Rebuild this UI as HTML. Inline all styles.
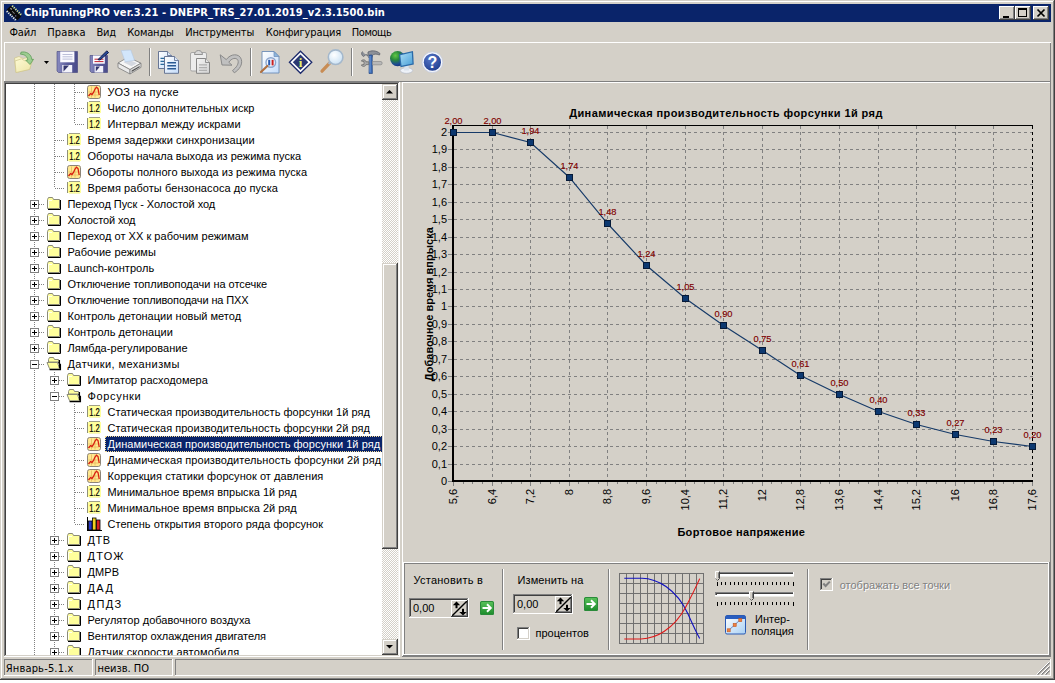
<!DOCTYPE html>
<html lang="ru"><head><meta charset="utf-8"><title>ChipTuningPRO</title><style>
html,body{margin:0;padding:0}
body{width:1055px;height:683px;overflow:hidden;background:#fff;position:relative;font-family:"Liberation Sans",sans-serif;font-size:11px;color:#000}
#win{position:absolute;left:0;top:0;width:1055px;height:680px;background:#d4d0c8;overflow:hidden}
.a{position:absolute}
.t{position:absolute;white-space:nowrap;line-height:16px}
.tah{font-family:"DejaVu Sans Condensed","Liberation Sans",sans-serif}
svg{position:absolute;overflow:visible}
</style></head><body><div id="win">
<div class="a" style="left:0px;top:0px;width:1055px;height:680px;background:#d4d0c8;"></div><div class="a" style="left:1px;top:1px;width:1053px;height:1px;background:#fff;"></div><div class="a" style="left:1px;top:1px;width:1px;height:678px;background:#fff;"></div><div class="a" style="left:0px;top:679px;width:1055px;height:1px;background:#404040;"></div><div class="a" style="left:1054px;top:0px;width:1px;height:680px;background:#404040;"></div><div class="a" style="left:1px;top:678px;width:1053px;height:1px;background:#808080;"></div><div class="a" style="left:1053px;top:1px;width:1px;height:678px;background:#808080;"></div>
<div class="a" style="left:4px;top:4px;width:1047px;height:18px;background:#0a246a;"></div><svg class="a" style="left:6px;top:5px" width="16" height="16" viewBox="0 0 16 16">
<g transform="rotate(45 8 8)">
<g fill="#e6f08c"><rect x="1.6" y="3.2" width="1.2" height="2.2"/><rect x="3.9" y="3.2" width="1.2" height="2.2"/><rect x="6.2" y="3.2" width="1.2" height="2.2"/><rect x="8.5" y="3.2" width="1.2" height="2.2"/><rect x="10.8" y="3.2" width="1.2" height="2.2"/><rect x="13.1" y="3.2" width="1.2" height="2.2"/></g>
<g fill="#ececdc"><rect x="1.6" y="10.6" width="1.2" height="2.2"/><rect x="3.9" y="10.6" width="1.2" height="2.2"/><rect x="6.2" y="10.6" width="1.2" height="2.2"/><rect x="8.5" y="10.6" width="1.2" height="2.2"/><rect x="10.8" y="10.6" width="1.2" height="2.2"/><rect x="13.1" y="10.6" width="1.2" height="2.2"/></g>
<rect x="0.4" y="5.2" width="15.2" height="5.6" fill="#0a0a0a"/>
<rect x="2" y="6.4" width="2" height="1.4" fill="#9a9a9a"/>
<rect x="5.4" y="7.6" width="3.4" height=".9" fill="#8a8a8a"/>
<rect x="10.6" y="8.2" width="1.3" height="1.3" fill="#6a6aa0"/>
</g></svg><div class="t" style="left:24px;top:5px;height:16px;line-height:16px;color:#fff;font-weight:bold;font-size:11px;letter-spacing:0.05px;font-family:'DejaVu Sans Condensed','Liberation Sans',sans-serif" id="ttl">ChipTuningPRO ver.3.21 - DNEPR_TRS_27.01.2019_v2.3.1500.bin</div><div class="a" style="left:999px;top:6px;width:16px;height:14px;background:#d4d0c8;"></div><div class="a" style="left:999px;top:6px;width:15px;height:1px;background:#fff;"></div><div class="a" style="left:999px;top:6px;width:1px;height:13px;background:#fff;"></div><div class="a" style="left:999px;top:19px;width:16px;height:1px;background:#404040;"></div><div class="a" style="left:1014px;top:6px;width:1px;height:14px;background:#404040;"></div><div class="a" style="left:1000px;top:18px;width:14px;height:1px;background:#808080;"></div><div class="a" style="left:1013px;top:7px;width:1px;height:12px;background:#808080;"></div><div class="a" style="left:1003px;top:16px;width:6px;height:2px;background:#000;"></div><div class="a" style="left:1015px;top:6px;width:16px;height:14px;background:#d4d0c8;"></div><div class="a" style="left:1015px;top:6px;width:15px;height:1px;background:#fff;"></div><div class="a" style="left:1015px;top:6px;width:1px;height:13px;background:#fff;"></div><div class="a" style="left:1015px;top:19px;width:16px;height:1px;background:#404040;"></div><div class="a" style="left:1030px;top:6px;width:1px;height:14px;background:#404040;"></div><div class="a" style="left:1016px;top:18px;width:14px;height:1px;background:#808080;"></div><div class="a" style="left:1029px;top:7px;width:1px;height:12px;background:#808080;"></div><div class="a" style="left:1018px;top:8px;width:9px;height:9px;background:#000;"></div><div class="a" style="left:1019px;top:10px;width:7px;height:6px;background:#d4d0c8;"></div><div class="a" style="left:1033px;top:6px;width:16px;height:14px;background:#d4d0c8;"></div><div class="a" style="left:1033px;top:6px;width:15px;height:1px;background:#fff;"></div><div class="a" style="left:1033px;top:6px;width:1px;height:13px;background:#fff;"></div><div class="a" style="left:1033px;top:19px;width:16px;height:1px;background:#404040;"></div><div class="a" style="left:1048px;top:6px;width:1px;height:14px;background:#404040;"></div><div class="a" style="left:1034px;top:18px;width:14px;height:1px;background:#808080;"></div><div class="a" style="left:1047px;top:7px;width:1px;height:12px;background:#808080;"></div><svg class="a" style="left:1033px;top:6px" width="16" height="14"><path d="M4.5 3.5 L11.5 10.5 M11.5 3.5 L4.5 10.5" stroke="#000" stroke-width="1.7" fill="none"/></svg>
<div class="t tah mi" style="left:9.5px;top:25px;height:16px;font-size:11px;letter-spacing:-0.2px">Файл</div><div class="t tah mi" style="left:47.3px;top:25px;height:16px;font-size:11px;letter-spacing:0.1px">Правка</div><div class="t tah mi" style="left:96.5px;top:25px;height:16px;font-size:11px;letter-spacing:-0.2px">Вид</div><div class="t tah mi" style="left:127.3px;top:25px;height:16px;font-size:11px;letter-spacing:-0.2px">Команды</div><div class="t tah mi" style="left:185.2px;top:25px;height:16px;font-size:11px;letter-spacing:-0.18px">Инструменты</div><div class="t tah mi" style="left:265.8px;top:25px;height:16px;font-size:11px;letter-spacing:-0.14px">Конфигурация</div><div class="t tah mi" style="left:351.8px;top:25px;height:16px;font-size:11px;letter-spacing:-0.45px">Помощь</div>
<div class="a" style="left:4px;top:42px;width:1047px;height:1px;background:#fff;"></div><div class="a" style="left:4px;top:42px;width:1px;height:39px;background:#fff;"></div><div class="a" style="left:4px;top:81px;width:1047px;height:1px;background:#808080;"></div><div class="a" style="left:1050px;top:43px;width:1px;height:39px;background:#808080;"></div><div class="a" style="left:149px;top:48px;width:1px;height:28px;background:#808080;"></div><div class="a" style="left:150px;top:48px;width:1px;height:28px;background:#fff;"></div><div class="a" style="left:250px;top:48px;width:1px;height:28px;background:#808080;"></div><div class="a" style="left:251px;top:48px;width:1px;height:28px;background:#fff;"></div><div class="a" style="left:351px;top:48px;width:1px;height:28px;background:#808080;"></div><div class="a" style="left:352px;top:48px;width:1px;height:28px;background:#fff;"></div><svg style="left:44px;top:61px" width="6" height="4"><path d="M0 0H5L2.5 3Z" fill="#000"/></svg><svg width="0" height="0" style="left:0;top:0"><defs>
<linearGradient id="gfl" x1="0" y1="0" x2="1" y2="0"><stop offset="0" stop-color="#8a8cc0"/><stop offset=".5" stop-color="#5a5c9c"/><stop offset="1" stop-color="#4a4c8a"/></linearGradient>
<linearGradient id="gfol" x1="0" y1="0" x2="1" y2="1"><stop offset="0" stop-color="#fdfad4"/><stop offset="1" stop-color="#ece4a4"/></linearGradient>
<linearGradient id="gsh" x1="0" y1="0" x2="1" y2="1"><stop offset="0" stop-color="#30306a"/><stop offset="1" stop-color="#f4f4ff"/></linearGradient>
<linearGradient id="gpg" x1="0" y1="0" x2="1" y2="1"><stop offset="0" stop-color="#ffffff"/><stop offset="1" stop-color="#c4dcfa"/></linearGradient>
<linearGradient id="gpgg" x1="0" y1="0" x2="1" y2="1"><stop offset="0" stop-color="#f4f4f4"/><stop offset="1" stop-color="#d2d2d2"/></linearGradient>
<radialGradient id="ghelp" cx=".4" cy=".3" r=".8"><stop offset="0" stop-color="#5878c8"/><stop offset="1" stop-color="#1c3a8c"/></radialGradient>
<radialGradient id="glens" cx=".4" cy=".35" r=".7"><stop offset="0" stop-color="#ffffff"/><stop offset="1" stop-color="#c8e0f4"/></radialGradient>
<radialGradient id="gglobe" cx=".35" cy=".3" r=".8"><stop offset="0" stop-color="#62c846"/><stop offset=".38" stop-color="#2a8a3a"/><stop offset=".72" stop-color="#1c4a94"/><stop offset="1" stop-color="#142a70"/></radialGradient>
<linearGradient id="gmon" x1="0" y1="0" x2="1" y2="1"><stop offset="0" stop-color="#a8dcf4"/><stop offset="1" stop-color="#4aa0d8"/></linearGradient>
<linearGradient id="ggrn" x1="0" y1="0" x2="0" y2="1"><stop offset="0" stop-color="#5cc45c"/><stop offset="1" stop-color="#1a8a2a"/></linearGradient>
<linearGradient id="gint" x1="0" y1="0" x2="1" y2="1"><stop offset="0" stop-color="#ffffff"/><stop offset="1" stop-color="#a8d0f4"/></linearGradient>
</defs></svg><svg style="left:12px;top:50px" width="24" height="24" viewBox="0 0 24 24">
<path d="M2.5 8 L7 6.5 L11 8.5 L16 7.5 L19.5 9 L18 19 L4 22.5 Z" fill="#f8f4c8" stroke="#cfc694" stroke-width=".8"/>
<path d="M3 11 L9.5 8.8 L13 11 L21 9.2 L17.5 19.5 L4 22.5 Z" fill="url(#gfol)" stroke="#cfc48c" stroke-width=".7"/>
<path d="M9 2.2 C14 1 19.5 4 19.8 9.5 L21.5 9.3 L18 14.5 L13.8 10.3 L15.8 10 C15.5 6.5 12.5 4.2 8.5 4.2 Z" fill="#9ccc90" stroke="#5c9c58" stroke-width=".8"/>
</svg><svg style="left:55px;top:50px" width="24" height="24" viewBox="0 0 24 24">
<path d="M2 1.5 H22.5 V22.5 H3.5 L2 21 Z" fill="url(#gfl)" stroke="#40427a" stroke-width=".6"/>
<rect x="5.2" y="1.5" width="14.2" height="10.8" fill="#fafaff"/>
<path d="M7.5 4.5H17.5M7.5 6.8H17.5M7.5 9.1H17.5" stroke="#b4b8d4" stroke-width=".9"/>
<rect x="7.2" y="15" width="10" height="7.5" fill="#f2f2fa"/>
<path d="M8.5 15.6 H14 L8.5 21.5Z" fill="#34366e"/>
</svg><svg style="left:87px;top:50px" width="24" height="24" viewBox="0 0 24 24">
<path d="M3 5.5 H20.5 V22.5 H4.5 L3 21 Z" fill="url(#gfl)" stroke="#40427a" stroke-width=".6"/>
<rect x="6" y="5.5" width="11.8" height="8.2" fill="#fafaff"/>
<path d="M7.5 9.2H16.5" stroke="#c02030" stroke-width="1"/><path d="M7.5 11.6H16.5" stroke="#c02030" stroke-width="1"/>
<rect x="7.6" y="16" width="8.6" height="6.5" fill="#f2f2fa"/>
<path d="M8.8 16.6 H13 L8.8 21.5Z" fill="#34366e"/>
<path d="M19.8 0.8 L21.6 2.6 L13 10 L11 9.6 Z" fill="#2a4a9a" stroke="#14204a" stroke-width="1"/>
</svg><svg style="left:117px;top:49px" width="25" height="26" viewBox="0 0 25 26">
<path d="M1 14 L11 8.2 L24 14.2 L13 20.6 Z" fill="#f6f6f6" stroke="#7c7c7c" stroke-width=".8"/>
<path d="M1 14 L13 20.6 L13 25 L1 18.6 Z" fill="#e9e9e9" stroke="#7c7c7c" stroke-width=".8"/>
<path d="M13 20.6 L24 14.2 L24 18.4 L13 25 Z" fill="#dcdcdc" stroke="#7c7c7c" stroke-width=".8"/>
<path d="M6.5 13.2 L11.5 10.4 L20 14.2 L14.5 17.2 Z" fill="#d4d8e0"/>
<path d="M4.2 1.6 L13.8 1 L17.5 11.2 L8.2 12.8 Z" fill="#d2e6fb" stroke="#b4c8e0" stroke-width=".6"/>
<path d="M14.6 21.6 L22.6 16.9 L22.6 18.2 L14.6 23 Z" fill="#505050"/>
</svg><svg style="left:156px;top:50px" width="24" height="24" viewBox="0 0 24 24">
<path d="M2.5 1.5 H11.5 L15.5 5.5 V18.5 H2.5Z" fill="url(#gpg)" stroke="#5a6a8c" stroke-width=".9"/>
<path d="M11.5 1.5V5.5H15.5" fill="#dce8f8" stroke="#5a6a8c" stroke-width=".8"/>
<path d="M4.5 8.3H9M4.5 11.3H9M4.5 14.3H9" stroke="#2a6a9c" stroke-width="1.3"/>
<path d="M8.5 6.5 H18.5 L22.5 10.5 V23.3 H8.5Z" fill="url(#gpg)" stroke="#5a6a8c" stroke-width=".9"/>
<path d="M18.5 6.5V10.5H22.5" fill="#dce8f8" stroke="#5a6a8c" stroke-width=".8"/>
<path d="M11.3 12.8H20M11.3 15.8H20M11.3 18.8H20" stroke="#2a5a94" stroke-width="1.4"/>
</svg><svg style="left:188px;top:49px" width="24" height="25" viewBox="0 0 24 25">
<rect x="2.5" y="3.5" width="16" height="18.5" rx="1.5" fill="#ececec" stroke="#a0a0a0" stroke-width=".9"/>
<path d="M6.5 5.5 C6.5 3.5 8 1.5 10.5 1.5 C13 1.5 14.5 3.5 14.5 5.5 Z" fill="#d8d8d8" stroke="#8a8a8a" stroke-width=".9"/>
<path d="M8.5 9.5 H17.5 L21.5 13.5 V24.3 H8.5Z" fill="url(#gpgg)" stroke="#7c7c7c" stroke-width=".9"/>
<path d="M17.5 9.5V13.5H21.5" fill="#e4e4e4" stroke="#7c7c7c" stroke-width=".8"/>
<path d="M11 15.8H19M11 18.6H19M11 21.4H19" stroke="#b0b0b0" stroke-width="1.2"/>
</svg><svg style="left:219px;top:50px" width="24" height="24" viewBox="0 0 24 24">
<path d="M1.2 4.8 L3 15 L13 15.2 L9.8 12.3 C12.5 8 17.5 7 19 10.5 C20 13.5 17.5 17.5 13.5 20.5 L15.3 22.8 C20.5 19.5 23.8 14.5 22.3 9.3 C20.3 3 11.5 3.5 7.3 9.6 Z" fill="#c0c0c0" stroke="#8a8a8a" stroke-width="1"/>
</svg><svg style="left:258px;top:50px" width="24" height="24" viewBox="0 0 24 24">
<path d="M4 1.5 H16 L21 6.5 V23 H4Z" fill="url(#gpg)" stroke="#6c8cb8" stroke-width=".9"/>
<path d="M16 1.5V6.5H21Z" fill="#8cb4dc" stroke="#6c8cb8" stroke-width=".7"/>
<circle cx="12.8" cy="12.5" r="4.8" fill="#f0f6ff" stroke="#8aa4cc" stroke-width="1.4"/>
<rect x="10.2" y="9.8" width="2" height="5.6" fill="#2a5ab0"/>
<rect x="13.6" y="9.8" width="2" height="5.6" fill="#c82020"/>
<path d="M9.3 16 L3 22" stroke="#b07040" stroke-width="2.2" stroke-linecap="round"/>
</svg><svg style="left:288px;top:50px" width="25" height="25" viewBox="0 0 25 25">
<path d="M12.5 1.2 L23.8 12.3 L12.5 23.3 L1.4 12.3Z" fill="#fff" stroke="#1c2a6c" stroke-width="1.3"/>
<path d="M12.5 4.6 L20.3 12.3 L12.5 19.9 L4.8 12.3Z" fill="#2a3874"/>
<text x="12.5" y="17" font-family="Liberation Serif,serif" font-weight="bold" font-size="13" fill="#e6f06c" text-anchor="middle">i</text>
</svg><svg style="left:319px;top:48px" width="27" height="27" viewBox="0 0 27 27">
<path d="M10.8 14.8 L3 23.2" stroke="#c88c54" stroke-width="3.2" stroke-linecap="round"/>
<path d="M11.8 13.6 L9.6 16" stroke="#a8b8c8" stroke-width="2.4"/>
<circle cx="16.6" cy="9.2" r="7.3" fill="url(#glens)" stroke="#a4b8cc" stroke-width="1.6"/>
</svg><svg style="left:359px;top:49px" width="25" height="26" viewBox="0 0 25 26">
<path d="M3.5 2.5 C2 4 2.5 6.5 4.5 7.5 L7 5.5 L9 6.5 L9 3 C12 1.5 17 1 21 4.5 L20.5 6 C17 4.5 14.5 5 13.5 6.5 L13 8.5 L9.5 8.5" fill="#8c9098" stroke="#5c6068" stroke-width=".8"/>
<path d="M10.3 6 H13.2 L13.4 24.5 H10 Z" fill="#3a6ab4" stroke="#2a4a84" stroke-width=".7"/>
<path d="M11 7 V23.5" stroke="#7aa4e0" stroke-width=".9"/>
<path d="M13.5 12.5 H22 C23.5 12.5 23.5 15.8 22 15.8 H13.5Z" fill="#b8b8b8" stroke="#8a8a8a" stroke-width=".7"/>
<path d="M9.8 12.8 H7 C6.5 10.5 3.5 10.2 2.2 12 L5 12.6 V15.4 L2.2 16 C3.5 18 6.5 17.8 7 15.6 H9.8Z" fill="#a8a8a8" stroke="#6c6c6c" stroke-width=".8"/>
</svg><svg style="left:389px;top:49px" width="26" height="26" viewBox="0 0 26 26">
<circle cx="8.6" cy="9.6" r="7.6" fill="url(#gglobe)"/>
<ellipse cx="17.5" cy="21.5" rx="6.2" ry="2.8" fill="#eef2f8" stroke="#b4bcc8" stroke-width=".7"/>
<path d="M15.5 16 H19.5 L20 21.5 H15Z" fill="#dce4ee"/>
<path d="M10 5.2 L24 2 L24.8 15.5 L11.5 18.2 Z" fill="#2a6aa8"/>
<path d="M11.3 6.3 L22.8 3.6 L23.5 14.5 L12.5 16.8 Z" fill="url(#gmon)"/>
</svg><svg style="left:420px;top:50px" width="25" height="25" viewBox="0 0 25 25">
<circle cx="12.4" cy="12.2" r="10.4" fill="#f4f6fc" stroke="#c4cce0" stroke-width=".8"/>
<circle cx="12.4" cy="12.2" r="8.6" fill="url(#ghelp)"/>
<text x="12.5" y="18" font-family="Liberation Sans,sans-serif" font-weight="bold" font-size="16" fill="#fff" text-anchor="middle">?</text>
</svg>
<div class="a" id="tree" style="left:4px;top:82px;width:396px;height:575px;background:#fff;overflow:hidden"><div class="a" style="left:30px;top:2px;width:1px;height:572px;background:repeating-linear-gradient(to bottom,#808080 0 1px,transparent 1px 2px)"></div><div class="a" style="left:50px;top:2px;width:1px;height:104px;background:repeating-linear-gradient(to bottom,#808080 0 1px,transparent 1px 2px)"></div><div class="a" style="left:70px;top:2px;width:1px;height:40px;background:repeating-linear-gradient(to bottom,#808080 0 1px,transparent 1px 2px)"></div><div class="a" style="left:50px;top:290px;width:1px;height:284px;background:repeating-linear-gradient(to bottom,#808080 0 1px,transparent 1px 2px)"></div><div class="a" style="left:70px;top:322px;width:1px;height:120px;background:repeating-linear-gradient(to bottom,#808080 0 1px,transparent 1px 2px)"></div><div class="a" style="left:71px;top:10px;width:10px;height:1px;background:repeating-linear-gradient(to right,#808080 0 1px,transparent 1px 2px)"></div><svg style="left:82px;top:2px" width="16" height="16" viewBox="0 0 16 16"><rect x="1.5" y="1.5" width="13" height="13" rx="2.2" fill="#ffe890" stroke="#8c8478" stroke-width="1"/><path d="M2.5 8H13.5M2.5 11H13.5M5.5 2.5V13.5M9 2.5V13.5" stroke="#e8b860" stroke-width=".8"/><path d="M2.5 12 L4.5 9.5 L6 10.5 L7.5 8.5 L9 5 L10.5 3.2 L12 4.5 L13.2 11" fill="none" stroke="#d82010" stroke-width="1.3"/></svg><div class="t tr" style="left:103.5px;top:2px;letter-spacing:0.273px">УОЗ на пуске</div><div class="a" style="left:71px;top:26px;width:10px;height:1px;background:repeating-linear-gradient(to right,#808080 0 1px,transparent 1px 2px)"></div><svg style="left:82px;top:18px" width="16" height="16" viewBox="0 0 16 16"><rect x="2" y="2" width="13" height="11" fill="#ffff9c"/><rect x="1" y="2" width="1" height="11" fill="#909078"/><rect x="3" y="1" width="11" height="1" fill="#a0a088"/><rect x="3" y="13" width="11" height="1" fill="#f6f6c0"/><text x="3.2" y="11.8" font-family="Liberation Sans,sans-serif" font-size="11.6" fill="#000" stroke="#000" stroke-width=".22" textLength="10.6" lengthAdjust="spacingAndGlyphs">1.2</text></svg><div class="t tr" style="left:103.5px;top:18px;letter-spacing:0.054px">Число дополнительных искр</div><div class="a" style="left:71px;top:42px;width:10px;height:1px;background:repeating-linear-gradient(to right,#808080 0 1px,transparent 1px 2px)"></div><svg style="left:82px;top:34px" width="16" height="16" viewBox="0 0 16 16"><rect x="2" y="2" width="13" height="11" fill="#ffff9c"/><rect x="1" y="2" width="1" height="11" fill="#909078"/><rect x="3" y="1" width="11" height="1" fill="#a0a088"/><rect x="3" y="13" width="11" height="1" fill="#f6f6c0"/><text x="3.2" y="11.8" font-family="Liberation Sans,sans-serif" font-size="11.6" fill="#000" stroke="#000" stroke-width=".22" textLength="10.6" lengthAdjust="spacingAndGlyphs">1.2</text></svg><div class="t tr" style="left:103.5px;top:34px;letter-spacing:0.114px">Интервал между искрами</div><div class="a" style="left:51px;top:58px;width:10px;height:1px;background:repeating-linear-gradient(to right,#808080 0 1px,transparent 1px 2px)"></div><svg style="left:62px;top:50px" width="16" height="16" viewBox="0 0 16 16"><rect x="2" y="2" width="13" height="11" fill="#ffff9c"/><rect x="1" y="2" width="1" height="11" fill="#909078"/><rect x="3" y="1" width="11" height="1" fill="#a0a088"/><rect x="3" y="13" width="11" height="1" fill="#f6f6c0"/><text x="3.2" y="11.8" font-family="Liberation Sans,sans-serif" font-size="11.6" fill="#000" stroke="#000" stroke-width=".22" textLength="10.6" lengthAdjust="spacingAndGlyphs">1.2</text></svg><div class="t tr" style="left:83.5px;top:50px;letter-spacing:0.085px">Время задержки синхронизации</div><div class="a" style="left:51px;top:74px;width:10px;height:1px;background:repeating-linear-gradient(to right,#808080 0 1px,transparent 1px 2px)"></div><svg style="left:62px;top:66px" width="16" height="16" viewBox="0 0 16 16"><rect x="2" y="2" width="13" height="11" fill="#ffff9c"/><rect x="1" y="2" width="1" height="11" fill="#909078"/><rect x="3" y="1" width="11" height="1" fill="#a0a088"/><rect x="3" y="13" width="11" height="1" fill="#f6f6c0"/><text x="3.2" y="11.8" font-family="Liberation Sans,sans-serif" font-size="11.6" fill="#000" stroke="#000" stroke-width=".22" textLength="10.6" lengthAdjust="spacingAndGlyphs">1.2</text></svg><div class="t tr" style="left:83.5px;top:66px;letter-spacing:0.000px">Обороты начала выхода из режима пуска</div><div class="a" style="left:51px;top:90px;width:10px;height:1px;background:repeating-linear-gradient(to right,#808080 0 1px,transparent 1px 2px)"></div><svg style="left:62px;top:82px" width="16" height="16" viewBox="0 0 16 16"><rect x="1.5" y="1.5" width="13" height="13" rx="2.2" fill="#ffe890" stroke="#8c8478" stroke-width="1"/><path d="M2.5 8H13.5M2.5 11H13.5M5.5 2.5V13.5M9 2.5V13.5" stroke="#e8b860" stroke-width=".8"/><path d="M2.5 12 L4.5 9.5 L6 10.5 L7.5 8.5 L9 5 L10.5 3.2 L12 4.5 L13.2 11" fill="none" stroke="#d82010" stroke-width="1.3"/></svg><div class="t tr" style="left:83.5px;top:82px;letter-spacing:0.054px">Обороты полного выхода из режима пуска</div><div class="a" style="left:51px;top:106px;width:10px;height:1px;background:repeating-linear-gradient(to right,#808080 0 1px,transparent 1px 2px)"></div><svg style="left:62px;top:98px" width="16" height="16" viewBox="0 0 16 16"><rect x="2" y="2" width="13" height="11" fill="#ffff9c"/><rect x="1" y="2" width="1" height="11" fill="#909078"/><rect x="3" y="1" width="11" height="1" fill="#a0a088"/><rect x="3" y="13" width="11" height="1" fill="#f6f6c0"/><text x="3.2" y="11.8" font-family="Liberation Sans,sans-serif" font-size="11.6" fill="#000" stroke="#000" stroke-width=".22" textLength="10.6" lengthAdjust="spacingAndGlyphs">1.2</text></svg><div class="t tr" style="left:83.5px;top:98px;letter-spacing:0.069px">Время работы бензонасоса до пуска</div><div class="a" style="left:35px;top:122px;width:6px;height:1px;background:repeating-linear-gradient(to right,#808080 0 1px,transparent 1px 2px)"></div><div class="a" style="left:26px;top:118px;width:7px;height:7px;border:1px solid #808080;background:#fff"></div><div class="a" style="left:28px;top:122px;width:5px;height:1px;background:#000;"></div><div class="a" style="left:30px;top:120px;width:1px;height:5px;background:#000;"></div><svg style="left:42px;top:114px" width="16" height="16" viewBox="0 0 16 16"><path d="M1.5 3.5 L2.5 1.5 H6.5 L7.5 3.5 H13.5 V12.5 H1.5Z" fill="#ffff9c" stroke="#8c8c78" stroke-width="1"/><path d="M14.5 4 V13.5 H2" fill="none" stroke="#000" stroke-width="1"/><path d="M2.5 4.5V11.5M2.5 4.5H6" stroke="#fffff0" stroke-width="1" fill="none"/></svg><div class="t tr" style="left:63.5px;top:114px;letter-spacing:-0.058px">Переход Пуск - Холостой ход</div><div class="a" style="left:35px;top:138px;width:6px;height:1px;background:repeating-linear-gradient(to right,#808080 0 1px,transparent 1px 2px)"></div><div class="a" style="left:26px;top:134px;width:7px;height:7px;border:1px solid #808080;background:#fff"></div><div class="a" style="left:28px;top:138px;width:5px;height:1px;background:#000;"></div><div class="a" style="left:30px;top:136px;width:1px;height:5px;background:#000;"></div><svg style="left:42px;top:130px" width="16" height="16" viewBox="0 0 16 16"><path d="M1.5 3.5 L2.5 1.5 H6.5 L7.5 3.5 H13.5 V12.5 H1.5Z" fill="#ffff9c" stroke="#8c8c78" stroke-width="1"/><path d="M14.5 4 V13.5 H2" fill="none" stroke="#000" stroke-width="1"/><path d="M2.5 4.5V11.5M2.5 4.5H6" stroke="#fffff0" stroke-width="1" fill="none"/></svg><div class="t tr" style="left:63.5px;top:130px;letter-spacing:-0.118px">Холостой ход</div><div class="a" style="left:35px;top:154px;width:6px;height:1px;background:repeating-linear-gradient(to right,#808080 0 1px,transparent 1px 2px)"></div><div class="a" style="left:26px;top:150px;width:7px;height:7px;border:1px solid #808080;background:#fff"></div><div class="a" style="left:28px;top:154px;width:5px;height:1px;background:#000;"></div><div class="a" style="left:30px;top:152px;width:1px;height:5px;background:#000;"></div><svg style="left:42px;top:146px" width="16" height="16" viewBox="0 0 16 16"><path d="M1.5 3.5 L2.5 1.5 H6.5 L7.5 3.5 H13.5 V12.5 H1.5Z" fill="#ffff9c" stroke="#8c8c78" stroke-width="1"/><path d="M14.5 4 V13.5 H2" fill="none" stroke="#000" stroke-width="1"/><path d="M2.5 4.5V11.5M2.5 4.5H6" stroke="#fffff0" stroke-width="1" fill="none"/></svg><div class="t tr" style="left:63.5px;top:146px;letter-spacing:0.033px">Переход от ХХ к рабочим режимам</div><div class="a" style="left:35px;top:170px;width:6px;height:1px;background:repeating-linear-gradient(to right,#808080 0 1px,transparent 1px 2px)"></div><div class="a" style="left:26px;top:166px;width:7px;height:7px;border:1px solid #808080;background:#fff"></div><div class="a" style="left:28px;top:170px;width:5px;height:1px;background:#000;"></div><div class="a" style="left:30px;top:168px;width:1px;height:5px;background:#000;"></div><svg style="left:42px;top:162px" width="16" height="16" viewBox="0 0 16 16"><path d="M1.5 3.5 L2.5 1.5 H6.5 L7.5 3.5 H13.5 V12.5 H1.5Z" fill="#ffff9c" stroke="#8c8c78" stroke-width="1"/><path d="M14.5 4 V13.5 H2" fill="none" stroke="#000" stroke-width="1"/><path d="M2.5 4.5V11.5M2.5 4.5H6" stroke="#fffff0" stroke-width="1" fill="none"/></svg><div class="t tr" style="left:63.5px;top:162px;letter-spacing:0.077px">Рабочие режимы</div><div class="a" style="left:35px;top:186px;width:6px;height:1px;background:repeating-linear-gradient(to right,#808080 0 1px,transparent 1px 2px)"></div><div class="a" style="left:26px;top:182px;width:7px;height:7px;border:1px solid #808080;background:#fff"></div><div class="a" style="left:28px;top:186px;width:5px;height:1px;background:#000;"></div><div class="a" style="left:30px;top:184px;width:1px;height:5px;background:#000;"></div><svg style="left:42px;top:178px" width="16" height="16" viewBox="0 0 16 16"><path d="M1.5 3.5 L2.5 1.5 H6.5 L7.5 3.5 H13.5 V12.5 H1.5Z" fill="#ffff9c" stroke="#8c8c78" stroke-width="1"/><path d="M14.5 4 V13.5 H2" fill="none" stroke="#000" stroke-width="1"/><path d="M2.5 4.5V11.5M2.5 4.5H6" stroke="#fffff0" stroke-width="1" fill="none"/></svg><div class="t tr" style="left:63.5px;top:178px;letter-spacing:0.043px">Launch-контроль</div><div class="a" style="left:35px;top:202px;width:6px;height:1px;background:repeating-linear-gradient(to right,#808080 0 1px,transparent 1px 2px)"></div><div class="a" style="left:26px;top:198px;width:7px;height:7px;border:1px solid #808080;background:#fff"></div><div class="a" style="left:28px;top:202px;width:5px;height:1px;background:#000;"></div><div class="a" style="left:30px;top:200px;width:1px;height:5px;background:#000;"></div><svg style="left:42px;top:194px" width="16" height="16" viewBox="0 0 16 16"><path d="M1.5 3.5 L2.5 1.5 H6.5 L7.5 3.5 H13.5 V12.5 H1.5Z" fill="#ffff9c" stroke="#8c8c78" stroke-width="1"/><path d="M14.5 4 V13.5 H2" fill="none" stroke="#000" stroke-width="1"/><path d="M2.5 4.5V11.5M2.5 4.5H6" stroke="#fffff0" stroke-width="1" fill="none"/></svg><div class="t tr" style="left:63.5px;top:194px;letter-spacing:-0.029px">Отключение топливоподачи на отсечке</div><div class="a" style="left:35px;top:218px;width:6px;height:1px;background:repeating-linear-gradient(to right,#808080 0 1px,transparent 1px 2px)"></div><div class="a" style="left:26px;top:214px;width:7px;height:7px;border:1px solid #808080;background:#fff"></div><div class="a" style="left:28px;top:218px;width:5px;height:1px;background:#000;"></div><div class="a" style="left:30px;top:216px;width:1px;height:5px;background:#000;"></div><svg style="left:42px;top:210px" width="16" height="16" viewBox="0 0 16 16"><path d="M1.5 3.5 L2.5 1.5 H6.5 L7.5 3.5 H13.5 V12.5 H1.5Z" fill="#ffff9c" stroke="#8c8c78" stroke-width="1"/><path d="M14.5 4 V13.5 H2" fill="none" stroke="#000" stroke-width="1"/><path d="M2.5 4.5V11.5M2.5 4.5H6" stroke="#fffff0" stroke-width="1" fill="none"/></svg><div class="t tr" style="left:63.5px;top:210px;letter-spacing:-0.110px">Отключение топливоподачи на ПХХ</div><div class="a" style="left:35px;top:234px;width:6px;height:1px;background:repeating-linear-gradient(to right,#808080 0 1px,transparent 1px 2px)"></div><div class="a" style="left:26px;top:230px;width:7px;height:7px;border:1px solid #808080;background:#fff"></div><div class="a" style="left:28px;top:234px;width:5px;height:1px;background:#000;"></div><div class="a" style="left:30px;top:232px;width:1px;height:5px;background:#000;"></div><svg style="left:42px;top:226px" width="16" height="16" viewBox="0 0 16 16"><path d="M1.5 3.5 L2.5 1.5 H6.5 L7.5 3.5 H13.5 V12.5 H1.5Z" fill="#ffff9c" stroke="#8c8c78" stroke-width="1"/><path d="M14.5 4 V13.5 H2" fill="none" stroke="#000" stroke-width="1"/><path d="M2.5 4.5V11.5M2.5 4.5H6" stroke="#fffff0" stroke-width="1" fill="none"/></svg><div class="t tr" style="left:63.5px;top:226px;letter-spacing:0.000px">Контроль детонации новый метод</div><div class="a" style="left:35px;top:250px;width:6px;height:1px;background:repeating-linear-gradient(to right,#808080 0 1px,transparent 1px 2px)"></div><div class="a" style="left:26px;top:246px;width:7px;height:7px;border:1px solid #808080;background:#fff"></div><div class="a" style="left:28px;top:250px;width:5px;height:1px;background:#000;"></div><div class="a" style="left:30px;top:248px;width:1px;height:5px;background:#000;"></div><svg style="left:42px;top:242px" width="16" height="16" viewBox="0 0 16 16"><path d="M1.5 3.5 L2.5 1.5 H6.5 L7.5 3.5 H13.5 V12.5 H1.5Z" fill="#ffff9c" stroke="#8c8c78" stroke-width="1"/><path d="M14.5 4 V13.5 H2" fill="none" stroke="#000" stroke-width="1"/><path d="M2.5 4.5V11.5M2.5 4.5H6" stroke="#fffff0" stroke-width="1" fill="none"/></svg><div class="t tr" style="left:63.5px;top:242px;letter-spacing:0.029px">Контроль детонации</div><div class="a" style="left:35px;top:266px;width:6px;height:1px;background:repeating-linear-gradient(to right,#808080 0 1px,transparent 1px 2px)"></div><div class="a" style="left:26px;top:262px;width:7px;height:7px;border:1px solid #808080;background:#fff"></div><div class="a" style="left:28px;top:266px;width:5px;height:1px;background:#000;"></div><div class="a" style="left:30px;top:264px;width:1px;height:5px;background:#000;"></div><svg style="left:42px;top:258px" width="16" height="16" viewBox="0 0 16 16"><path d="M1.5 3.5 L2.5 1.5 H6.5 L7.5 3.5 H13.5 V12.5 H1.5Z" fill="#ffff9c" stroke="#8c8c78" stroke-width="1"/><path d="M14.5 4 V13.5 H2" fill="none" stroke="#000" stroke-width="1"/><path d="M2.5 4.5V11.5M2.5 4.5H6" stroke="#fffff0" stroke-width="1" fill="none"/></svg><div class="t tr" style="left:63.5px;top:258px;letter-spacing:0.053px">Лямбда-регулирование</div><div class="a" style="left:35px;top:282px;width:6px;height:1px;background:repeating-linear-gradient(to right,#808080 0 1px,transparent 1px 2px)"></div><div class="a" style="left:26px;top:278px;width:7px;height:7px;border:1px solid #808080;background:#fff"></div><div class="a" style="left:28px;top:282px;width:5px;height:1px;background:#000;"></div><svg style="left:42px;top:274px" width="16" height="16" viewBox="0 0 16 16"><path d="M2.5 3.5 L3.5 1.5 H7.5 L8.5 3.5 H12.5 V6 H2.5Z" fill="#ffff9c" stroke="#8c8c78" stroke-width="1"/><path d="M1 6.5 H11.5 L13.6 12.8 H3.6Z" fill="#ffff9c" stroke="#8c8c78" stroke-width="1"/><path d="M13.5 4 V12.6 M3.6 13.6 H14.5 V8.6 L12.2 6.4" fill="none" stroke="#000" stroke-width="1.1"/></svg><div class="t tr" style="left:63.5px;top:274px;letter-spacing:0.412px">Датчики, механизмы</div><div class="a" style="left:55px;top:298px;width:6px;height:1px;background:repeating-linear-gradient(to right,#808080 0 1px,transparent 1px 2px)"></div><div class="a" style="left:46px;top:294px;width:7px;height:7px;border:1px solid #808080;background:#fff"></div><div class="a" style="left:48px;top:298px;width:5px;height:1px;background:#000;"></div><div class="a" style="left:50px;top:296px;width:1px;height:5px;background:#000;"></div><svg style="left:62px;top:290px" width="16" height="16" viewBox="0 0 16 16"><path d="M1.5 3.5 L2.5 1.5 H6.5 L7.5 3.5 H13.5 V12.5 H1.5Z" fill="#ffff9c" stroke="#8c8c78" stroke-width="1"/><path d="M14.5 4 V13.5 H2" fill="none" stroke="#000" stroke-width="1"/><path d="M2.5 4.5V11.5M2.5 4.5H6" stroke="#fffff0" stroke-width="1" fill="none"/></svg><div class="t tr" style="left:83.5px;top:290px;letter-spacing:0.016px">Имитатор расходомера</div><div class="a" style="left:55px;top:314px;width:6px;height:1px;background:repeating-linear-gradient(to right,#808080 0 1px,transparent 1px 2px)"></div><div class="a" style="left:46px;top:310px;width:7px;height:7px;border:1px solid #808080;background:#fff"></div><div class="a" style="left:48px;top:314px;width:5px;height:1px;background:#000;"></div><svg style="left:62px;top:306px" width="16" height="16" viewBox="0 0 16 16"><path d="M2.5 3.5 L3.5 1.5 H7.5 L8.5 3.5 H12.5 V6 H2.5Z" fill="#ffff9c" stroke="#8c8c78" stroke-width="1"/><path d="M1 6.5 H11.5 L13.6 12.8 H3.6Z" fill="#ffff9c" stroke="#8c8c78" stroke-width="1"/><path d="M13.5 4 V12.6 M3.6 13.6 H14.5 V8.6 L12.2 6.4" fill="none" stroke="#000" stroke-width="1.1"/></svg><div class="t tr" style="left:83.5px;top:306px;letter-spacing:0.657px">Форсунки</div><div class="a" style="left:71px;top:330px;width:10px;height:1px;background:repeating-linear-gradient(to right,#808080 0 1px,transparent 1px 2px)"></div><svg style="left:82px;top:322px" width="16" height="16" viewBox="0 0 16 16"><rect x="2" y="2" width="13" height="11" fill="#ffff9c"/><rect x="1" y="2" width="1" height="11" fill="#909078"/><rect x="3" y="1" width="11" height="1" fill="#a0a088"/><rect x="3" y="13" width="11" height="1" fill="#f6f6c0"/><text x="3.2" y="11.8" font-family="Liberation Sans,sans-serif" font-size="11.6" fill="#000" stroke="#000" stroke-width=".22" textLength="10.6" lengthAdjust="spacingAndGlyphs">1.2</text></svg><div class="t tr" style="left:103.5px;top:322px;letter-spacing:0.022px">Статическая производительность форсунки 1й ряд</div><div class="a" style="left:71px;top:346px;width:10px;height:1px;background:repeating-linear-gradient(to right,#808080 0 1px,transparent 1px 2px)"></div><svg style="left:82px;top:338px" width="16" height="16" viewBox="0 0 16 16"><rect x="2" y="2" width="13" height="11" fill="#ffff9c"/><rect x="1" y="2" width="1" height="11" fill="#909078"/><rect x="3" y="1" width="11" height="1" fill="#a0a088"/><rect x="3" y="13" width="11" height="1" fill="#f6f6c0"/><text x="3.2" y="11.8" font-family="Liberation Sans,sans-serif" font-size="11.6" fill="#000" stroke="#000" stroke-width=".22" textLength="10.6" lengthAdjust="spacingAndGlyphs">1.2</text></svg><div class="t tr" style="left:103.5px;top:338px;letter-spacing:0.022px">Статическая производительность форсунки 2й ряд</div><div class="a" style="left:71px;top:362px;width:10px;height:1px;background:repeating-linear-gradient(to right,#808080 0 1px,transparent 1px 2px)"></div><svg style="left:82px;top:354px" width="16" height="16" viewBox="0 0 16 16"><rect x="1.5" y="1.5" width="13" height="13" rx="2.2" fill="#ffe890" stroke="#8c8478" stroke-width="1"/><path d="M2.5 8H13.5M2.5 11H13.5M5.5 2.5V13.5M9 2.5V13.5" stroke="#e8b860" stroke-width=".8"/><path d="M2.5 12 L4.5 9.5 L6 10.5 L7.5 8.5 L9 5 L10.5 3.2 L12 4.5 L13.2 11" fill="none" stroke="#d82010" stroke-width="1.3"/></svg><div class="a" id="selbg" style="left:101px;top:354px;width:278px;height:16px;background:#0a246a;outline:1px dotted #f5db95;outline-offset:-1px"></div><div class="t tr" style="left:103.5px;top:354px;color:#fff;letter-spacing:0.035px">Динамическая производительность форсунки 1й ряд</div><div class="a" style="left:71px;top:378px;width:10px;height:1px;background:repeating-linear-gradient(to right,#808080 0 1px,transparent 1px 2px)"></div><svg style="left:82px;top:370px" width="16" height="16" viewBox="0 0 16 16"><rect x="1.5" y="1.5" width="13" height="13" rx="2.2" fill="#ffe890" stroke="#8c8478" stroke-width="1"/><path d="M2.5 8H13.5M2.5 11H13.5M5.5 2.5V13.5M9 2.5V13.5" stroke="#e8b860" stroke-width=".8"/><path d="M2.5 12 L4.5 9.5 L6 10.5 L7.5 8.5 L9 5 L10.5 3.2 L12 4.5 L13.2 11" fill="none" stroke="#d82010" stroke-width="1.3"/></svg><div class="t tr" style="left:103.5px;top:370px;letter-spacing:0.057px">Динамическая производительность форсунки 2й ряд</div><div class="a" style="left:71px;top:394px;width:10px;height:1px;background:repeating-linear-gradient(to right,#808080 0 1px,transparent 1px 2px)"></div><svg style="left:82px;top:386px" width="16" height="16" viewBox="0 0 16 16"><rect x="1.5" y="1.5" width="13" height="13" rx="2.2" fill="#ffe890" stroke="#8c8478" stroke-width="1"/><path d="M2.5 8H13.5M2.5 11H13.5M5.5 2.5V13.5M9 2.5V13.5" stroke="#e8b860" stroke-width=".8"/><path d="M2.5 12 L4.5 9.5 L6 10.5 L7.5 8.5 L9 5 L10.5 3.2 L12 4.5 L13.2 11" fill="none" stroke="#d82010" stroke-width="1.3"/></svg><div class="t tr" style="left:103.5px;top:386px;letter-spacing:0.054px">Коррекция статики форсунок от давления</div><div class="a" style="left:71px;top:410px;width:10px;height:1px;background:repeating-linear-gradient(to right,#808080 0 1px,transparent 1px 2px)"></div><svg style="left:82px;top:402px" width="16" height="16" viewBox="0 0 16 16"><rect x="2" y="2" width="13" height="11" fill="#ffff9c"/><rect x="1" y="2" width="1" height="11" fill="#909078"/><rect x="3" y="1" width="11" height="1" fill="#a0a088"/><rect x="3" y="13" width="11" height="1" fill="#f6f6c0"/><text x="3.2" y="11.8" font-family="Liberation Sans,sans-serif" font-size="11.6" fill="#000" stroke="#000" stroke-width=".22" textLength="10.6" lengthAdjust="spacingAndGlyphs">1.2</text></svg><div class="t tr" style="left:103.5px;top:402px;letter-spacing:0.019px">Минимальное время впрыска 1й ряд</div><div class="a" style="left:71px;top:426px;width:10px;height:1px;background:repeating-linear-gradient(to right,#808080 0 1px,transparent 1px 2px)"></div><svg style="left:82px;top:418px" width="16" height="16" viewBox="0 0 16 16"><rect x="2" y="2" width="13" height="11" fill="#ffff9c"/><rect x="1" y="2" width="1" height="11" fill="#909078"/><rect x="3" y="1" width="11" height="1" fill="#a0a088"/><rect x="3" y="13" width="11" height="1" fill="#f6f6c0"/><text x="3.2" y="11.8" font-family="Liberation Sans,sans-serif" font-size="11.6" fill="#000" stroke="#000" stroke-width=".22" textLength="10.6" lengthAdjust="spacingAndGlyphs">1.2</text></svg><div class="t tr" style="left:103.5px;top:418px;letter-spacing:0.019px">Минимальное время впрыска 2й ряд</div><div class="a" style="left:71px;top:442px;width:10px;height:1px;background:repeating-linear-gradient(to right,#808080 0 1px,transparent 1px 2px)"></div><svg style="left:82px;top:434px" width="16" height="16" viewBox="0 0 16 16"><rect x="1" y="1" width="1" height="14" fill="#000"/><rect x="1" y="14" width="15" height="1" fill="#000"/><rect x="2.5" y="5" width="3.5" height="9" fill="#2838c8" stroke="#000" stroke-width=".8"/><rect x="6.5" y="2" width="3.5" height="12" fill="#f0d020" stroke="#000" stroke-width=".8"/><rect x="10.5" y="4" width="3.5" height="10" fill="#d82020" stroke="#000" stroke-width=".8"/></svg><div class="t tr" style="left:103.5px;top:434px;letter-spacing:0.027px">Степень открытия второго ряда форсунок</div><div class="a" style="left:55px;top:458px;width:6px;height:1px;background:repeating-linear-gradient(to right,#808080 0 1px,transparent 1px 2px)"></div><div class="a" style="left:46px;top:454px;width:7px;height:7px;border:1px solid #808080;background:#fff"></div><div class="a" style="left:48px;top:458px;width:5px;height:1px;background:#000;"></div><div class="a" style="left:50px;top:456px;width:1px;height:5px;background:#000;"></div><svg style="left:62px;top:450px" width="16" height="16" viewBox="0 0 16 16"><path d="M1.5 3.5 L2.5 1.5 H6.5 L7.5 3.5 H13.5 V12.5 H1.5Z" fill="#ffff9c" stroke="#8c8c78" stroke-width="1"/><path d="M14.5 4 V13.5 H2" fill="none" stroke="#000" stroke-width="1"/><path d="M2.5 4.5V11.5M2.5 4.5H6" stroke="#fffff0" stroke-width="1" fill="none"/></svg><div class="t tr" style="left:83.5px;top:450px;letter-spacing:0.500px">ДТВ</div><div class="a" style="left:55px;top:474px;width:6px;height:1px;background:repeating-linear-gradient(to right,#808080 0 1px,transparent 1px 2px)"></div><div class="a" style="left:46px;top:470px;width:7px;height:7px;border:1px solid #808080;background:#fff"></div><div class="a" style="left:48px;top:474px;width:5px;height:1px;background:#000;"></div><div class="a" style="left:50px;top:472px;width:1px;height:5px;background:#000;"></div><svg style="left:62px;top:466px" width="16" height="16" viewBox="0 0 16 16"><path d="M1.5 3.5 L2.5 1.5 H6.5 L7.5 3.5 H13.5 V12.5 H1.5Z" fill="#ffff9c" stroke="#8c8c78" stroke-width="1"/><path d="M14.5 4 V13.5 H2" fill="none" stroke="#000" stroke-width="1"/><path d="M2.5 4.5V11.5M2.5 4.5H6" stroke="#fffff0" stroke-width="1" fill="none"/></svg><div class="t tr" style="left:83.5px;top:466px;letter-spacing:1.233px">ДТОЖ</div><div class="a" style="left:55px;top:490px;width:6px;height:1px;background:repeating-linear-gradient(to right,#808080 0 1px,transparent 1px 2px)"></div><div class="a" style="left:46px;top:486px;width:7px;height:7px;border:1px solid #808080;background:#fff"></div><div class="a" style="left:48px;top:490px;width:5px;height:1px;background:#000;"></div><div class="a" style="left:50px;top:488px;width:1px;height:5px;background:#000;"></div><svg style="left:62px;top:482px" width="16" height="16" viewBox="0 0 16 16"><path d="M1.5 3.5 L2.5 1.5 H6.5 L7.5 3.5 H13.5 V12.5 H1.5Z" fill="#ffff9c" stroke="#8c8c78" stroke-width="1"/><path d="M14.5 4 V13.5 H2" fill="none" stroke="#000" stroke-width="1"/><path d="M2.5 4.5V11.5M2.5 4.5H6" stroke="#fffff0" stroke-width="1" fill="none"/></svg><div class="t tr" style="left:83.5px;top:482px;letter-spacing:0.100px">ДМРВ</div><div class="a" style="left:55px;top:506px;width:6px;height:1px;background:repeating-linear-gradient(to right,#808080 0 1px,transparent 1px 2px)"></div><div class="a" style="left:46px;top:502px;width:7px;height:7px;border:1px solid #808080;background:#fff"></div><div class="a" style="left:48px;top:506px;width:5px;height:1px;background:#000;"></div><div class="a" style="left:50px;top:504px;width:1px;height:5px;background:#000;"></div><svg style="left:62px;top:498px" width="16" height="16" viewBox="0 0 16 16"><path d="M1.5 3.5 L2.5 1.5 H6.5 L7.5 3.5 H13.5 V12.5 H1.5Z" fill="#ffff9c" stroke="#8c8c78" stroke-width="1"/><path d="M14.5 4 V13.5 H2" fill="none" stroke="#000" stroke-width="1"/><path d="M2.5 4.5V11.5M2.5 4.5H6" stroke="#fffff0" stroke-width="1" fill="none"/></svg><div class="t tr" style="left:83.5px;top:498px;letter-spacing:1.400px">ДАД</div><div class="a" style="left:55px;top:522px;width:6px;height:1px;background:repeating-linear-gradient(to right,#808080 0 1px,transparent 1px 2px)"></div><div class="a" style="left:46px;top:518px;width:7px;height:7px;border:1px solid #808080;background:#fff"></div><div class="a" style="left:48px;top:522px;width:5px;height:1px;background:#000;"></div><div class="a" style="left:50px;top:520px;width:1px;height:5px;background:#000;"></div><svg style="left:62px;top:514px" width="16" height="16" viewBox="0 0 16 16"><path d="M1.5 3.5 L2.5 1.5 H6.5 L7.5 3.5 H13.5 V12.5 H1.5Z" fill="#ffff9c" stroke="#8c8c78" stroke-width="1"/><path d="M14.5 4 V13.5 H2" fill="none" stroke="#000" stroke-width="1"/><path d="M2.5 4.5V11.5M2.5 4.5H6" stroke="#fffff0" stroke-width="1" fill="none"/></svg><div class="t tr" style="left:83.5px;top:514px;letter-spacing:1.433px">ДПДЗ</div><div class="a" style="left:55px;top:538px;width:6px;height:1px;background:repeating-linear-gradient(to right,#808080 0 1px,transparent 1px 2px)"></div><div class="a" style="left:46px;top:534px;width:7px;height:7px;border:1px solid #808080;background:#fff"></div><div class="a" style="left:48px;top:538px;width:5px;height:1px;background:#000;"></div><div class="a" style="left:50px;top:536px;width:1px;height:5px;background:#000;"></div><svg style="left:62px;top:530px" width="16" height="16" viewBox="0 0 16 16"><path d="M1.5 3.5 L2.5 1.5 H6.5 L7.5 3.5 H13.5 V12.5 H1.5Z" fill="#ffff9c" stroke="#8c8c78" stroke-width="1"/><path d="M14.5 4 V13.5 H2" fill="none" stroke="#000" stroke-width="1"/><path d="M2.5 4.5V11.5M2.5 4.5H6" stroke="#fffff0" stroke-width="1" fill="none"/></svg><div class="t tr" style="left:83.5px;top:530px;letter-spacing:0.036px">Регулятор добавочного воздуха</div><div class="a" style="left:55px;top:554px;width:6px;height:1px;background:repeating-linear-gradient(to right,#808080 0 1px,transparent 1px 2px)"></div><div class="a" style="left:46px;top:550px;width:7px;height:7px;border:1px solid #808080;background:#fff"></div><div class="a" style="left:48px;top:554px;width:5px;height:1px;background:#000;"></div><div class="a" style="left:50px;top:552px;width:1px;height:5px;background:#000;"></div><svg style="left:62px;top:546px" width="16" height="16" viewBox="0 0 16 16"><path d="M1.5 3.5 L2.5 1.5 H6.5 L7.5 3.5 H13.5 V12.5 H1.5Z" fill="#ffff9c" stroke="#8c8c78" stroke-width="1"/><path d="M14.5 4 V13.5 H2" fill="none" stroke="#000" stroke-width="1"/><path d="M2.5 4.5V11.5M2.5 4.5H6" stroke="#fffff0" stroke-width="1" fill="none"/></svg><div class="t tr" style="left:83.5px;top:546px;letter-spacing:-0.033px">Вентилятор охлаждения двигателя</div><div class="a" style="left:55px;top:570px;width:6px;height:1px;background:repeating-linear-gradient(to right,#808080 0 1px,transparent 1px 2px)"></div><div class="a" style="left:46px;top:566px;width:7px;height:7px;border:1px solid #808080;background:#fff"></div><div class="a" style="left:48px;top:570px;width:5px;height:1px;background:#000;"></div><div class="a" style="left:50px;top:568px;width:1px;height:5px;background:#000;"></div><svg style="left:62px;top:562px" width="16" height="16" viewBox="0 0 16 16"><path d="M1.5 3.5 L2.5 1.5 H6.5 L7.5 3.5 H13.5 V12.5 H1.5Z" fill="#ffff9c" stroke="#8c8c78" stroke-width="1"/><path d="M14.5 4 V13.5 H2" fill="none" stroke="#000" stroke-width="1"/><path d="M2.5 4.5V11.5M2.5 4.5H6" stroke="#fffff0" stroke-width="1" fill="none"/></svg><div class="t tr" style="left:83.5px;top:562px;letter-spacing:0.152px">Датчик скорости автомобиля</div><div class="a" style="left:378px;top:2px;width:16px;height:571px;background:#fff;background-image:repeating-conic-gradient(#d4d0c8 0 25%,#fff 0 50%);background-size:2px 2px"></div><div class="a" style="left:378px;top:2px;width:16px;height:16px;background:#d4d0c8;"></div><div class="a" style="left:379px;top:3px;width:14px;height:1px;background:#fff;"></div><div class="a" style="left:379px;top:3px;width:1px;height:14px;background:#fff;"></div><div class="a" style="left:378px;top:17px;width:16px;height:1px;background:#404040;"></div><div class="a" style="left:393px;top:2px;width:1px;height:16px;background:#404040;"></div><div class="a" style="left:379px;top:16px;width:14px;height:1px;background:#808080;"></div><div class="a" style="left:392px;top:3px;width:1px;height:14px;background:#808080;"></div><svg style="left:382px;top:7px" width="8" height="5"><path d="M0 4.5H7L3.5 1Z" fill="#000"/></svg><div class="a" style="left:378px;top:557px;width:16px;height:16px;background:#d4d0c8;"></div><div class="a" style="left:379px;top:558px;width:14px;height:1px;background:#fff;"></div><div class="a" style="left:379px;top:558px;width:1px;height:14px;background:#fff;"></div><div class="a" style="left:378px;top:572px;width:16px;height:1px;background:#404040;"></div><div class="a" style="left:393px;top:557px;width:1px;height:16px;background:#404040;"></div><div class="a" style="left:379px;top:571px;width:14px;height:1px;background:#808080;"></div><div class="a" style="left:392px;top:558px;width:1px;height:14px;background:#808080;"></div><svg style="left:382px;top:563px" width="8" height="5"><path d="M0 0H7L3.5 3.5Z" fill="#000"/></svg><div class="a" style="left:378px;top:181px;width:16px;height:286px;background:#d4d0c8;"></div><div class="a" style="left:379px;top:182px;width:14px;height:1px;background:#fff;"></div><div class="a" style="left:379px;top:182px;width:1px;height:284px;background:#fff;"></div><div class="a" style="left:378px;top:466px;width:16px;height:1px;background:#404040;"></div><div class="a" style="left:393px;top:181px;width:1px;height:286px;background:#404040;"></div><div class="a" style="left:379px;top:465px;width:14px;height:1px;background:#808080;"></div><div class="a" style="left:392px;top:182px;width:1px;height:284px;background:#808080;"></div><div class="a" style="left:0px;top:0px;width:396px;height:1px;background:#808080;"></div><div class="a" style="left:0px;top:0px;width:1px;height:575px;background:#808080;"></div><div class="a" style="left:1px;top:1px;width:394px;height:1px;background:#404040;"></div><div class="a" style="left:1px;top:1px;width:1px;height:573px;background:#404040;"></div><div class="a" style="left:394px;top:1px;width:1px;height:573px;background:#f4f3f0;"></div><div class="a" style="left:395px;top:0px;width:1px;height:575px;background:#fff;"></div><div class="a" style="left:1px;top:573px;width:394px;height:1px;background:#d4d0c8;"></div><div class="a" style="left:0px;top:574px;width:396px;height:1px;background:#fff;"></div></div>
<div class="a" style="left:402px;top:82px;width:649px;height:1px;background:#fff;"></div><div class="a" style="left:402px;top:82px;width:1px;height:574px;background:#fff;"></div><div class="a" style="left:1050px;top:82px;width:1px;height:575px;background:#808080;"></div><svg style="left:0;top:0" width="1055" height="683" viewBox="0 0 1055 683" font-family="Liberation Sans,sans-serif"><path d="M492.5 126V480M530.5 126V480M569.5 126V480M607.5 126V480M646.5 126V480M685.5 126V480M723.5 126V480M762.5 126V480M800.5 126V480M839.5 126V480M878.5 126V480M916.5 126V480M955.5 126V480M993.5 126V480M1032.5 126V480" stroke="#808080" stroke-width="1" stroke-dasharray="3 3" fill="none" shape-rendering="crispEdges"/><path d="M454 464.5H1033M454 446.5H1033M454 429.5H1033M454 411.5H1033M454 394.5H1033M454 376.5H1033M454 359.5H1033M454 341.5H1033M454 324.5H1033M454 306.5H1033M454 289.5H1033M454 272.5H1033M454 254.5H1033M454 237.5H1033M454 219.5H1033M454 202.5H1033M454 184.5H1033M454 167.5H1033M454 149.5H1033M454 132.5H1033" stroke="#808080" stroke-width="1" stroke-dasharray="3 3" fill="none" shape-rendering="crispEdges"/><path d="M448 481.5H452M448 464.5H452M448 446.5H452M448 429.5H452M448 411.5H452M448 394.5H452M448 376.5H452M448 359.5H452M448 341.5H452M448 324.5H452M448 306.5H452M448 289.5H452M448 272.5H452M448 254.5H452M448 237.5H452M448 219.5H452M448 202.5H452M448 184.5H452M448 167.5H452M448 149.5H452M448 132.5H452M453.5 482V486M492.5 482V486M530.5 482V486M569.5 482V486M607.5 482V486M646.5 482V486M685.5 482V486M723.5 482V486M762.5 482V486M800.5 482V486M839.5 482V486M878.5 482V486M916.5 482V486M955.5 482V486M993.5 482V486M1032.5 482V486" stroke="#808080" stroke-width="1" fill="none" shape-rendering="crispEdges"/><path d="M463.5 482V484M472.5 482V484M482.5 482V484M501.5 482V484M511.5 482V484M521.5 482V484M540.5 482V484M550.5 482V484M559.5 482V484M578.5 482V484M588.5 482V484M598.5 482V484M617.5 482V484M627.5 482V484M636.5 482V484M656.5 482V484M665.5 482V484M675.5 482V484M694.5 482V484M704.5 482V484M714.5 482V484M733.5 482V484M742.5 482V484M752.5 482V484M771.5 482V484M781.5 482V484M791.5 482V484M810.5 482V484M820.5 482V484M829.5 482V484M849.5 482V484M858.5 482V484M868.5 482V484M887.5 482V484M897.5 482V484M907.5 482V484M926.5 482V484M936.5 482V484M945.5 482V484M964.5 482V484M974.5 482V484M984.5 482V484M1003.5 482V484M1013.5 482V484M1022.5 482V484" stroke="#808080" stroke-width="1" fill="none" shape-rendering="crispEdges"/><rect x="452" y="125" width="2" height="357" fill="#000"/><rect x="452" y="480" width="581" height="2" fill="#000"/><rect x="452" y="125" width="581" height="1" fill="#000"/><path d="M1032.5 126V480" stroke="#000" stroke-width="1" stroke-dasharray="3 3" shape-rendering="crispEdges"/><polyline points="453.5,132.5 492.5,132.5 530.5,142.5 569.5,177.5 607.5,223.5 646.5,265.5 685.5,298.5 723.5,325.5 762.5,350.5 800.5,375.5 839.5,394.5 878.5,411.5 916.5,424.5 955.5,434.5 993.5,441.5 1032.5,446.5" fill="none" stroke="#163a68" stroke-width="1.15"/><rect x="450.5" y="129.5" width="6" height="6" fill="#0c3870" stroke="#061a38" stroke-width="1"/><rect x="489.5" y="129.5" width="6" height="6" fill="#0c3870" stroke="#061a38" stroke-width="1"/><rect x="527.5" y="139.5" width="6" height="6" fill="#0c3870" stroke="#061a38" stroke-width="1"/><rect x="566.5" y="174.5" width="6" height="6" fill="#0c3870" stroke="#061a38" stroke-width="1"/><rect x="604.5" y="220.5" width="6" height="6" fill="#0c3870" stroke="#061a38" stroke-width="1"/><rect x="643.5" y="262.5" width="6" height="6" fill="#0c3870" stroke="#061a38" stroke-width="1"/><rect x="682.5" y="295.5" width="6" height="6" fill="#0c3870" stroke="#061a38" stroke-width="1"/><rect x="720.5" y="322.5" width="6" height="6" fill="#0c3870" stroke="#061a38" stroke-width="1"/><rect x="759.5" y="347.5" width="6" height="6" fill="#0c3870" stroke="#061a38" stroke-width="1"/><rect x="797.5" y="372.5" width="6" height="6" fill="#0c3870" stroke="#061a38" stroke-width="1"/><rect x="836.5" y="391.5" width="6" height="6" fill="#0c3870" stroke="#061a38" stroke-width="1"/><rect x="875.5" y="408.5" width="6" height="6" fill="#0c3870" stroke="#061a38" stroke-width="1"/><rect x="913.5" y="421.5" width="6" height="6" fill="#0c3870" stroke="#061a38" stroke-width="1"/><rect x="952.5" y="431.5" width="6" height="6" fill="#0c3870" stroke="#061a38" stroke-width="1"/><rect x="990.5" y="438.5" width="6" height="6" fill="#0c3870" stroke="#061a38" stroke-width="1"/><rect x="1029.5" y="443.5" width="6" height="6" fill="#0c3870" stroke="#061a38" stroke-width="1"/><g font-size="9.3" fill="#800000" text-anchor="middle" stroke="#800000" stroke-width=".15"><text x="453.5" y="124">2,00</text><text x="492.5" y="124">2,00</text><text x="530.5" y="134">1,94</text><text x="569.5" y="169">1,74</text><text x="607.5" y="215">1,48</text><text x="646.5" y="257">1,24</text><text x="685.5" y="290">1,05</text><text x="723.5" y="317">0,90</text><text x="762.5" y="342">0,75</text><text x="800.5" y="367">0,61</text><text x="839.5" y="386">0,50</text><text x="878.5" y="403">0,40</text><text x="916.5" y="416">0,33</text><text x="955.5" y="426">0,27</text><text x="993.5" y="433">0,23</text><text x="1032.5" y="438">0,20</text></g><g font-size="11" fill="#000" text-anchor="end"><text x="447" y="485">0</text><text x="447" y="468">0,1</text><text x="447" y="450">0,2</text><text x="447" y="433">0,3</text><text x="447" y="415">0,4</text><text x="447" y="398">0,5</text><text x="447" y="380">0,6</text><text x="447" y="363">0,7</text><text x="447" y="345">0,8</text><text x="447" y="328">0,9</text><text x="447" y="310">1</text><text x="447" y="293">1,1</text><text x="447" y="276">1,2</text><text x="447" y="258">1,3</text><text x="447" y="241">1,4</text><text x="447" y="223">1,5</text><text x="447" y="206">1,6</text><text x="447" y="188">1,7</text><text x="447" y="171">1,8</text><text x="447" y="153">1,9</text><text x="447" y="136">2</text></g><g font-size="11" fill="#000" text-anchor="end"><text transform="translate(457 489) rotate(-90)">5,6</text><text transform="translate(496 489) rotate(-90)">6,4</text><text transform="translate(534 489) rotate(-90)">7,2</text><text transform="translate(573 489) rotate(-90)">8</text><text transform="translate(611 489) rotate(-90)">8,8</text><text transform="translate(650 489) rotate(-90)">9,6</text><text transform="translate(689 489) rotate(-90)">10,4</text><text transform="translate(727 489) rotate(-90)">11,2</text><text transform="translate(766 489) rotate(-90)">12</text><text transform="translate(804 489) rotate(-90)">12,8</text><text transform="translate(843 489) rotate(-90)">13,6</text><text transform="translate(882 489) rotate(-90)">14,4</text><text transform="translate(920 489) rotate(-90)">15,2</text><text transform="translate(959 489) rotate(-90)">16</text><text transform="translate(997 489) rotate(-90)">16,8</text><text transform="translate(1036 489) rotate(-90)">17,6</text></g><text id="ctitle" x="726" y="117" font-size="11" font-weight="bold" text-anchor="middle" letter-spacing="0.42">Динамическая производительность форсунки 1й ряд</text><text id="xtitle" x="741.3" y="536" font-size="11" font-weight="bold" text-anchor="middle" letter-spacing="0.34">Бортовое напряжение</text><text id="ytitle" transform="translate(432.6 304.2) rotate(-90)" font-size="11" font-weight="bold" text-anchor="middle">Добавочное время впрыска</text></svg>
<div class="a" style="left:403px;top:562px;width:647px;height:1px;background:#fff;"></div><div class="a" style="left:403px;top:562px;width:1px;height:94px;background:#fff;"></div><div class="a" style="left:403px;top:655px;width:647px;height:1px;background:#808080;"></div><div class="a" style="left:1049px;top:562px;width:1px;height:94px;background:#808080;"></div><div class="a" style="left:404px;top:563px;width:645px;height:1px;background:#808080;"></div><div class="a" style="left:404px;top:563px;width:1px;height:92px;background:#808080;"></div><div class="a" style="left:404px;top:654px;width:645px;height:1px;background:#fff;"></div><div class="a" style="left:1048px;top:563px;width:1px;height:92px;background:#fff;"></div><div class="a" style="left:402px;top:656px;width:649px;height:1px;background:#808080;"></div><div class="t" id="ust" style="left:413.5px;top:572px;letter-spacing:0.25px">Установить в</div><div class="a" style="left:409px;top:598px;width:60px;height:20px;background:#d4d0c8;"></div><div class="a" style="left:409px;top:598px;width:59px;height:1px;background:#808080;"></div><div class="a" style="left:409px;top:598px;width:1px;height:19px;background:#808080;"></div><div class="a" style="left:410px;top:599px;width:57px;height:1px;background:#404040;"></div><div class="a" style="left:410px;top:599px;width:1px;height:17px;background:#404040;"></div><div class="a" style="left:409px;top:617px;width:60px;height:1px;background:#fff;"></div><div class="a" style="left:468px;top:598px;width:1px;height:20px;background:#fff;"></div><div class="a" style="left:410px;top:616px;width:58px;height:1px;background:#d4d0c8;"></div><div class="a" style="left:467px;top:599px;width:1px;height:18px;background:#d4d0c8;"></div><div class="t" style="left:413px;top:600px">0,00</div><div class="a" style="left:451px;top:600px;width:17px;height:17px;background:#d4d0c8;"></div><div class="a" style="left:451px;top:600px;width:16px;height:1px;background:#fff;"></div><div class="a" style="left:451px;top:600px;width:1px;height:16px;background:#fff;"></div><div class="a" style="left:451px;top:616px;width:17px;height:1px;background:#404040;"></div><div class="a" style="left:467px;top:600px;width:1px;height:17px;background:#404040;"></div><div class="a" style="left:452px;top:615px;width:15px;height:1px;background:#808080;"></div><div class="a" style="left:466px;top:601px;width:1px;height:15px;background:#808080;"></div><svg style="left:451px;top:600px" width="17" height="17" viewBox="0 0 17 17"><path d="M1.2 15.8 L15.8 1.2" stroke="#000" stroke-width="1.4"/><path d="M1.8 5.2 H9.2 L5.5 1.6Z" fill="#000"/><rect x="4.5" y="5" width="2" height="3.2" fill="#000"/><path d="M8.3 12 H15.7 L12 15.6Z" fill="#000"/><rect x="11" y="8.8" width="2" height="3.4" fill="#000"/></svg><svg style="left:480px;top:601px" width="14" height="14" viewBox="0 0 14 14"><rect x="0" y="0" width="14" height="14" rx="1.5" fill="url(#ggrn)"/><rect x=".5" y=".5" width="13" height="13" rx="1.5" fill="none" stroke="#2a8a3a" stroke-width="1"/><path d="M2.5 7H10M7 3.3L10.8 7L7 10.7" stroke="#fff" stroke-width="1.9" fill="none"/></svg><div class="a" style="left:502px;top:569px;width:1px;height:81px;background:#808080;"></div><div class="a" style="left:503px;top:569px;width:1px;height:81px;background:#fff;"></div><div class="t" id="izm" style="left:517.5px;top:572px;letter-spacing:0.1px">Изменить на</div><div class="a" style="left:513px;top:594px;width:60px;height:20px;background:#d4d0c8;"></div><div class="a" style="left:513px;top:594px;width:59px;height:1px;background:#808080;"></div><div class="a" style="left:513px;top:594px;width:1px;height:19px;background:#808080;"></div><div class="a" style="left:514px;top:595px;width:57px;height:1px;background:#404040;"></div><div class="a" style="left:514px;top:595px;width:1px;height:17px;background:#404040;"></div><div class="a" style="left:513px;top:613px;width:60px;height:1px;background:#fff;"></div><div class="a" style="left:572px;top:594px;width:1px;height:20px;background:#fff;"></div><div class="a" style="left:514px;top:612px;width:58px;height:1px;background:#d4d0c8;"></div><div class="a" style="left:571px;top:595px;width:1px;height:18px;background:#d4d0c8;"></div><div class="t" style="left:517px;top:596px">0,00</div><div class="a" style="left:555px;top:596px;width:17px;height:17px;background:#d4d0c8;"></div><div class="a" style="left:555px;top:596px;width:16px;height:1px;background:#fff;"></div><div class="a" style="left:555px;top:596px;width:1px;height:16px;background:#fff;"></div><div class="a" style="left:555px;top:612px;width:17px;height:1px;background:#404040;"></div><div class="a" style="left:571px;top:596px;width:1px;height:17px;background:#404040;"></div><div class="a" style="left:556px;top:611px;width:15px;height:1px;background:#808080;"></div><div class="a" style="left:570px;top:597px;width:1px;height:15px;background:#808080;"></div><svg style="left:555px;top:596px" width="17" height="17" viewBox="0 0 17 17"><path d="M1.2 15.8 L15.8 1.2" stroke="#000" stroke-width="1.4"/><path d="M1.8 5.2 H9.2 L5.5 1.6Z" fill="#000"/><rect x="4.5" y="5" width="2" height="3.2" fill="#000"/><path d="M8.3 12 H15.7 L12 15.6Z" fill="#000"/><rect x="11" y="8.8" width="2" height="3.4" fill="#000"/></svg><svg style="left:584px;top:597px" width="14" height="14" viewBox="0 0 14 14"><rect x="0" y="0" width="14" height="14" rx="1.5" fill="url(#ggrn)"/><rect x=".5" y=".5" width="13" height="13" rx="1.5" fill="none" stroke="#2a8a3a" stroke-width="1"/><path d="M2.5 7H10M7 3.3L10.8 7L7 10.7" stroke="#fff" stroke-width="1.9" fill="none"/></svg><div class="a" style="left:517px;top:627px;width:13px;height:13px;background:#fff;"></div><div class="a" style="left:517px;top:627px;width:12px;height:1px;background:#808080;"></div><div class="a" style="left:517px;top:627px;width:1px;height:12px;background:#808080;"></div><div class="a" style="left:518px;top:628px;width:10px;height:1px;background:#404040;"></div><div class="a" style="left:518px;top:628px;width:1px;height:10px;background:#404040;"></div><div class="a" style="left:517px;top:639px;width:13px;height:1px;background:#fff;"></div><div class="a" style="left:529px;top:627px;width:1px;height:13px;background:#fff;"></div><div class="a" style="left:518px;top:638px;width:11px;height:1px;background:#d4d0c8;"></div><div class="a" style="left:528px;top:628px;width:1px;height:11px;background:#d4d0c8;"></div><div class="t" id="proc" style="left:535.5px;top:625px">процентов</div><div class="a" style="left:608px;top:569px;width:1px;height:81px;background:#808080;"></div><div class="a" style="left:609px;top:569px;width:1px;height:81px;background:#fff;"></div><svg style="left:0;top:0" width="1055" height="683"><path d="M619.5 573V644M626.5 573V644M633.5 573V644M640.5 573V644M647.5 573V644M654.5 573V644M661.5 573V644M668.5 573V644M675.5 573V644M682.5 573V644M689.5 573V644M696.5 573V644M703.5 573V644M619 573.5H704M619 583.5H704M619 593.5H704M619 603.5H704M619 613.5H704M619 623.5H704M619 633.5H704M619 643.5H704" stroke="#707070" stroke-width="1" fill="none" shape-rendering="crispEdges"/><path d="M624.3 578.3 H642 C652 578.5 660 582.5 666 586.5 C676 593.5 683 603 688 614 C692 623 696 632 699.7 638.5" fill="none" stroke="#1010c0" stroke-width="1.1"/><path d="M624.3 639 H641 C650 638.5 658 635.5 664 631.5 C674 625 681 616 686 606.5 C691 597 695.5 588 699.7 578.6" fill="none" stroke="#e01818" stroke-width="1.1"/></svg><div class="a" style="left:715px;top:572px;width:79px;height:1px;background:#808080;"></div><div class="a" style="left:715px;top:572px;width:1px;height:3px;background:#808080;"></div><div class="a" style="left:716px;top:573px;width:77px;height:1px;background:#404040;"></div><div class="a" style="left:716px;top:573px;width:1px;height:2px;background:#404040;"></div><div class="a" style="left:717px;top:574px;width:76px;height:1px;background:#fff;"></div><div class="a" style="left:715px;top:575px;width:79px;height:1px;background:#fff;"></div><div class="a" style="left:793px;top:572px;width:1px;height:4px;background:#fff;"></div><div class="a" style="left:715px;top:576px;width:79px;height:1px;background:#ecebe6;"></div><svg style="left:715px;top:571px" width="6" height="11" viewBox="0 0 6 11"><path d="M0 0H5V7.5L2.5 10L0 7.5Z" fill="#d4d0c8"/><path d="M0.5 7.5V0.5H4.5" stroke="#fff" fill="none"/><path d="M4.5 0.5V7.5L2.5 9.5" stroke="#404040" fill="none"/><path d="M0.5 7.5L2.5 9.5" stroke="#808080" fill="none"/><path d="M3.5 1.5V7" stroke="#808080" fill="none"/></svg><div class="a" style="left:717px;top:582px;width:1px;height:4px;background:#000;"></div><div class="a" style="left:721px;top:582px;width:1px;height:3px;background:#000;"></div><div class="a" style="left:725px;top:582px;width:1px;height:3px;background:#000;"></div><div class="a" style="left:730px;top:582px;width:1px;height:3px;background:#000;"></div><div class="a" style="left:734px;top:582px;width:1px;height:3px;background:#000;"></div><div class="a" style="left:738px;top:582px;width:1px;height:3px;background:#000;"></div><div class="a" style="left:742px;top:582px;width:1px;height:3px;background:#000;"></div><div class="a" style="left:746px;top:582px;width:1px;height:3px;background:#000;"></div><div class="a" style="left:751px;top:582px;width:1px;height:3px;background:#000;"></div><div class="a" style="left:755px;top:582px;width:1px;height:3px;background:#000;"></div><div class="a" style="left:759px;top:582px;width:1px;height:3px;background:#000;"></div><div class="a" style="left:763px;top:582px;width:1px;height:3px;background:#000;"></div><div class="a" style="left:767px;top:582px;width:1px;height:3px;background:#000;"></div><div class="a" style="left:772px;top:582px;width:1px;height:3px;background:#000;"></div><div class="a" style="left:776px;top:582px;width:1px;height:3px;background:#000;"></div><div class="a" style="left:780px;top:582px;width:1px;height:3px;background:#000;"></div><div class="a" style="left:784px;top:582px;width:1px;height:3px;background:#000;"></div><div class="a" style="left:788px;top:582px;width:1px;height:3px;background:#000;"></div><div class="a" style="left:793px;top:582px;width:1px;height:4px;background:#000;"></div><div class="a" style="left:715px;top:592px;width:79px;height:1px;background:#808080;"></div><div class="a" style="left:715px;top:592px;width:1px;height:3px;background:#808080;"></div><div class="a" style="left:716px;top:593px;width:77px;height:1px;background:#404040;"></div><div class="a" style="left:716px;top:593px;width:1px;height:2px;background:#404040;"></div><div class="a" style="left:717px;top:594px;width:76px;height:1px;background:#fff;"></div><div class="a" style="left:715px;top:595px;width:79px;height:1px;background:#fff;"></div><div class="a" style="left:793px;top:592px;width:1px;height:4px;background:#fff;"></div><div class="a" style="left:715px;top:596px;width:79px;height:1px;background:#ecebe6;"></div><svg style="left:749px;top:591px" width="6" height="11" viewBox="0 0 6 11"><path d="M0 0H5V7.5L2.5 10L0 7.5Z" fill="#d4d0c8"/><path d="M0.5 7.5V0.5H4.5" stroke="#fff" fill="none"/><path d="M4.5 0.5V7.5L2.5 9.5" stroke="#404040" fill="none"/><path d="M0.5 7.5L2.5 9.5" stroke="#808080" fill="none"/><path d="M3.5 1.5V7" stroke="#808080" fill="none"/></svg><div class="a" style="left:717px;top:602px;width:1px;height:4px;background:#000;"></div><div class="a" style="left:721px;top:602px;width:1px;height:3px;background:#000;"></div><div class="a" style="left:725px;top:602px;width:1px;height:3px;background:#000;"></div><div class="a" style="left:730px;top:602px;width:1px;height:3px;background:#000;"></div><div class="a" style="left:734px;top:602px;width:1px;height:3px;background:#000;"></div><div class="a" style="left:738px;top:602px;width:1px;height:3px;background:#000;"></div><div class="a" style="left:742px;top:602px;width:1px;height:3px;background:#000;"></div><div class="a" style="left:746px;top:602px;width:1px;height:3px;background:#000;"></div><div class="a" style="left:751px;top:602px;width:1px;height:3px;background:#000;"></div><div class="a" style="left:755px;top:602px;width:1px;height:3px;background:#000;"></div><div class="a" style="left:759px;top:602px;width:1px;height:3px;background:#000;"></div><div class="a" style="left:763px;top:602px;width:1px;height:3px;background:#000;"></div><div class="a" style="left:767px;top:602px;width:1px;height:3px;background:#000;"></div><div class="a" style="left:772px;top:602px;width:1px;height:3px;background:#000;"></div><div class="a" style="left:776px;top:602px;width:1px;height:3px;background:#000;"></div><div class="a" style="left:780px;top:602px;width:1px;height:3px;background:#000;"></div><div class="a" style="left:784px;top:602px;width:1px;height:3px;background:#000;"></div><div class="a" style="left:788px;top:602px;width:1px;height:3px;background:#000;"></div><div class="a" style="left:793px;top:602px;width:1px;height:4px;background:#000;"></div><svg style="left:725px;top:615px" width="21" height="20" viewBox="0 0 21 20"><rect x=".5" y=".5" width="20" height="18.5" rx="1.5" fill="url(#gint)" stroke="#2a5ab4" stroke-width="1"/><rect x="1" y="1" width="19" height="3" fill="#2a5ec0"/><path d="M3.5 15.5L15.5 4.5" stroke="#6a8ac8" stroke-width="1"/><rect x="2.2" y="13.8" width="3" height="3" fill="#f08040" stroke="#c05820" stroke-width=".6"/><rect x="8.2" y="8.5" width="3" height="3" fill="#f08040" stroke="#c05820" stroke-width=".6"/><rect x="13.8" y="3.6" width="3" height="3" fill="#f08040" stroke="#c05820" stroke-width=".6"/></svg><div class="t" id="int1" style="left:722px;top:610.5px;width:101px;text-align:center">Интер-</div><div class="t" id="int2" style="left:722px;top:623px;width:101px;text-align:center">поляция</div><div class="a" style="left:807px;top:569px;width:1px;height:81px;background:#808080;"></div><div class="a" style="left:808px;top:569px;width:1px;height:81px;background:#fff;"></div><div class="a" style="left:820px;top:578px;width:13px;height:13px;background:#d4d0c8;"></div><div class="a" style="left:820px;top:578px;width:12px;height:1px;background:#808080;"></div><div class="a" style="left:820px;top:578px;width:1px;height:12px;background:#808080;"></div><div class="a" style="left:821px;top:579px;width:10px;height:1px;background:#404040;"></div><div class="a" style="left:821px;top:579px;width:1px;height:10px;background:#404040;"></div><div class="a" style="left:820px;top:590px;width:13px;height:1px;background:#fff;"></div><div class="a" style="left:832px;top:578px;width:1px;height:13px;background:#fff;"></div><svg style="left:823px;top:581px" width="7" height="7"><path d="M0.3 2.6L2.6 5L6.8 0.6" stroke="#808080" stroke-width="2.1" fill="none"/></svg><div class="t" id="otobr" style="left:839.7px;top:577px;color:#808080;text-shadow:1px 1px 0 #fff">отображать все точки</div>
<div class="a" style="left:4px;top:659px;width:89px;height:1px;background:#808080;"></div><div class="a" style="left:4px;top:659px;width:1px;height:16px;background:#808080;"></div><div class="a" style="left:4px;top:675px;width:89px;height:1px;background:#fff;"></div><div class="a" style="left:92px;top:659px;width:1px;height:17px;background:#fff;"></div><div class="a" style="left:95px;top:659px;width:78px;height:1px;background:#808080;"></div><div class="a" style="left:95px;top:659px;width:1px;height:16px;background:#808080;"></div><div class="a" style="left:95px;top:675px;width:78px;height:1px;background:#fff;"></div><div class="a" style="left:172px;top:659px;width:1px;height:17px;background:#fff;"></div><div class="a" style="left:175px;top:659px;width:876px;height:1px;background:#808080;"></div><div class="a" style="left:175px;top:659px;width:1px;height:16px;background:#808080;"></div><div class="a" style="left:175px;top:675px;width:876px;height:1px;background:#fff;"></div><div class="a" style="left:1050px;top:659px;width:1px;height:17px;background:#fff;"></div><div class="t tah" id="st1" style="left:5.7px;top:661px;letter-spacing:0.18px">Январь-5.1.x</div><div class="t tah" id="st2" style="left:97.5px;top:661px">неизв. ПО</div><svg style="left:1036px;top:661px" width="14" height="14"><path d="M13.5 1.5L1.5 13.5M13.5 5.5L5.5 13.5M13.5 9.5L9.5 13.5" stroke="#808080" stroke-width="1.6"/><path d="M13.5 0.5L0.5 13.5M13.5 4.5L4.5 13.5M13.5 8.5L8.5 13.5" stroke="#fff" stroke-width="1"/></svg>
</div></body></html>
